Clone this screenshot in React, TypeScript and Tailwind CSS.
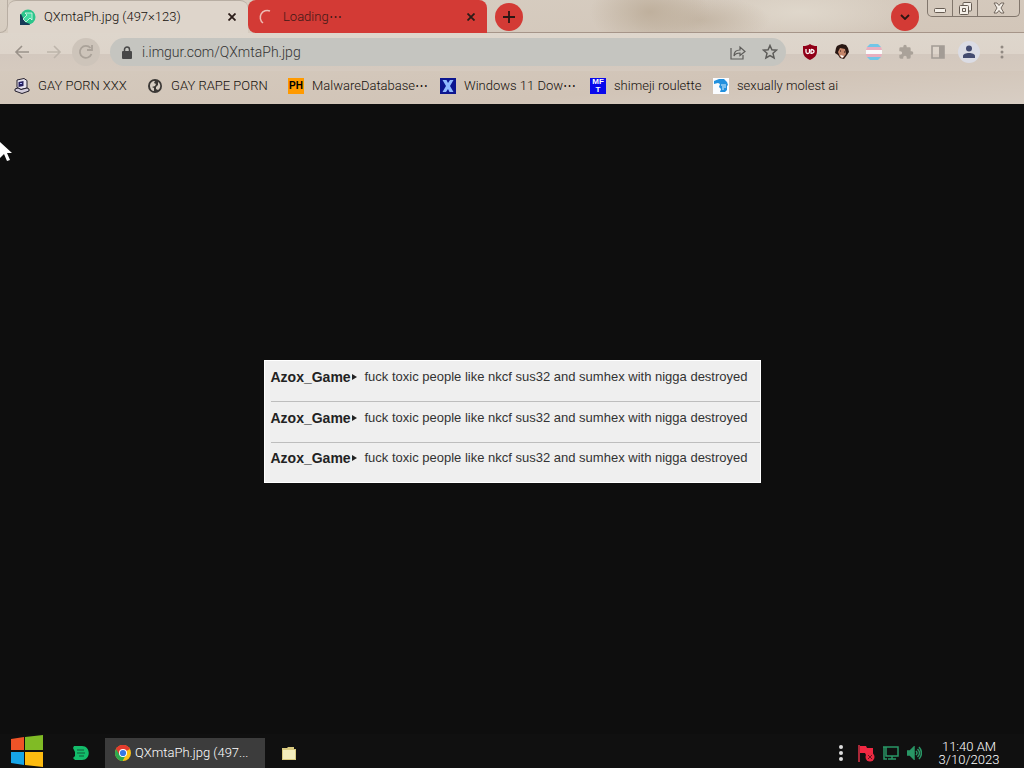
import type { ReactNode } from 'react';

function Arrow({ flip, className }: { flip?: boolean; className: string }) {
  return (
    <svg viewBox="0 0 16 16" className={`size-4 ${className}`} fill="none" stroke="currentColor" strokeWidth="1.600">
      {flip ? <path d="M1 8h13M8 2l6 6-6 6" /> : <path d="M15 8H2M8 2L2 8l6 6" />}
    </svg>
  );
}

function Cross() {
  return (
    <svg viewBox="0 0 8 8" className="size-2" fill="none" stroke="#2a1c18" strokeWidth="1.8">
      <path d="M.5.5l7 7M7.5.5l-7 7" />
    </svg>
  );
}

function Chrome() {
  return (
    <svg viewBox="0 0 16 16" className="size-4 shrink-0">
      <circle cx="8" cy="8" r="8" fill="#fbc116" />
      <path d="M8 8L1.1 4A8 8 0 0 1 14.9 4z" fill="#e33b2e" />
      <path d="M8 8L1.1 4A8 8 0 0 0 7.5 16L11 9.7z" fill="#2da94f" />
      <path d="M8 4h6.9A8 8 0 0 0 1.1 4L4.6 10z" fill="#e33b2e" />
      <circle cx="8" cy="8" r="4" fill="#fff" />
      <circle cx="8" cy="8" r="3.1" fill="#3578e5" />
    </svg>
  );
}

const bookmarks: { label: string; box: string; icon: ReactNode }[] = [
  {
    label: 'GAY PORN XXX',
    box: 'w-[133px]',
    icon: (
      <svg viewBox="0 0 16 16" className="size-4 shrink-0">
        <path d="M3 2l7-1.500 3 2v7.500l-6 1.500-4-2z" fill="#e7e3ef" stroke="#24202e" />
        <path d="M4.500 4l5-1v5l-5 1z" fill="#25205f" />
        <path d="M1 11l3-1 3 1.500 6-1.500 2 1v2l-7 2.500-7-2.500z" fill="#d2ccda" stroke="#24202e" />
        <path d="M6 5h2v1H6z" fill="#aab4ff" />
      </svg>
    ),
  },
  {
    label: 'GAY RAPE PORN',
    box: 'w-[141px]',
    icon: (
      <svg viewBox="0 0 16 16" className="size-4 shrink-0">
        <circle cx="8" cy="8" r="7" fill="#3b3836" />
        <path d="M3 8c0-3 2-5 5-5l-1 2 2 1-1 2-3 1 2 1v3c-2 0-4-2-4-5zM9 9l2-2V4c3 2 3 6 0 8l-2-1z" fill="#d6cdc3" />
      </svg>
    ),
  },
  {
    label: 'MalwareDatabase⋯',
    box: 'w-[152px]',
    icon: (
      <span className="flex size-4 shrink-0 items-center justify-center bg-[#ff9a00] font-['Liberation_Sans',sans-serif] text-[10px] font-bold text-black">
        PH
      </span>
    ),
  },
  {
    label: 'Windows 11 Dow⋯',
    box: 'w-[150px]',
    icon: (
      <svg viewBox="0 0 16 16" className="size-4 shrink-0">
        <path d="M0 0h16v16H0z" fill="#0c1690" />
        <path d="M2.500 2h4L8 5l2-3h3.500L10 8l3.500 6h-4L8 11l-2 3H2.500L6 8z" fill="#8fb9ff" />
      </svg>
    ),
  },
  {
    label: 'shimeji roulette',
    box: 'w-[123px]',
    icon: (
      <span className="flex size-4 shrink-0 flex-col items-center justify-center bg-[#0808ec] font-['Liberation_Sans',sans-serif] text-[8px] leading-[8px] font-bold text-white">
        <span>MF</span>
        <span>T</span>
      </span>
    ),
  },
  {
    label: 'sexually molest ai',
    box: 'w-[130px]',
    icon: (
      <svg viewBox="0 0 16 16" className="size-4 shrink-0">
        <path d="M0 0h16v16H0z" fill="#fafcff" />
        <path d="M1 3l5-2h5l3 3 1 3-1 1v4l-2 2H7l1-3-2-2 1-3-2-1-4 1z" fill="#2190de" />
        <path d="M8 7h5M9 9h4M9 11h2" stroke="#d8f0ff" />
      </svg>
    ),
  },
];

const message = 'fuck toxic people like nkcf sus32 and sumhex with nigga destroyed';

function TabStrip() {
  return (
    <div className="flex h-[33px] items-start">
      <div className="h-[33px] w-2 rounded-br-lg border-r border-b border-[#b8aea3]" />
      <div className="flex h-[33px] w-[240px] items-center gap-2 rounded-t-lg border-t border-[#b8aea3] bg-[#ded5cb] pr-3 pl-3">
        <svg viewBox="0 0 16 16" className="size-4 shrink-0">
          <circle cx="8" cy="8" r="7.500" fill="#2cc58b" />
          <path d="M1 5a7.500 7.500 0 1 0 9 10L5 13z" fill="#173b58" />
          <path d="M5 4h7v7l-2-2-4 4-3-3 4-4z" fill="#42dba1" stroke="#e6f8ed" strokeWidth=".8" />
        </svg>
        <span className="grow whitespace-nowrap">QXmtaPh.jpg (497×123)</span>
        <button aria-label="Close QXmtaPh.jpg"><Cross /></button>
      </div>
      <div className="flex h-[33px] w-[239px] items-center gap-2 rounded-lg rounded-br-none bg-[#d33a35] pr-3 pl-2.5">
        <svg viewBox="0 0 16 16" className="size-4 shrink-0" fill="none" stroke="#edbcb4" strokeWidth="1.500">
          <path d="M12 2A7 7 0 0 0 5 14" />
        </svg>
        <span className="grow pl-px text-[#3d1915]">Loading⋯</span>
        <button aria-label="Close loading tab"><Cross /></button>
      </div>
      <div className="flex h-[33px] grow items-start border-b border-[#a69589]">
        <button aria-label="New tab" className="mt-[3px] ml-2 flex size-7 items-center justify-center rounded-full bg-[#d33a35]">
          <svg viewBox="0 0 12 12" className="size-3" stroke="#2b1613" strokeWidth="1.800"><path d="M6 0v12M0 6h12" /></svg>
        </button>
        <button aria-label="Search tabs" className="mt-[3px] ml-auto flex size-7 items-center justify-center rounded-full bg-[#d33a35]">
          <svg viewBox="0 0 10 6" className="h-1.5 w-2.5" fill="none" stroke="#2b1613" strokeWidth="1.800"><path d="M1 1l4 4 4-4" /></svg>
        </button>
        <div className="mr-1 ml-2 flex h-[17px] rounded-b-[5px] border border-t-0 border-[#81766c] text-[#665c53]">
          <button aria-label="Minimize" className="flex w-[25px] items-center justify-center border-r border-[#81766c]">
            <svg viewBox="0 0 12 5" className="mt-1 h-[5px] w-3"><rect x=".5" y=".5" width="11" height="4" rx="1" fill="#f4efe8" stroke="currentColor" /></svg>
          </button>
          <button aria-label="Restore" className="flex w-[25px] items-center justify-center border-r border-[#81766c]">
            <svg viewBox="0 0 13 13" className="size-[13px]" fill="#f4efe8" stroke="currentColor">
              <rect x="4" y=".5" width="8.500" height="8.500" rx="1" />
              <rect x=".5" y="3.500" width="9" height="9" rx="1" />
              <path d="M3.500 6.500h3v3h-3z" />
            </svg>
          </button>
          <button aria-label="Close window" className="flex w-[41px] items-center justify-center">
            <svg viewBox="0 0 12 12" className="size-3" fill="#f4efe8" stroke="currentColor" strokeWidth=".9">
              <path d="M1 1h3l2 2.500L8 1h3L8 6l3 5H8L6 8.500 4 11H1l3-5z" />
            </svg>
          </button>
        </div>
      </div>
    </div>
  );
}

function Toolbar() {
  return (
    <div className="flex h-[38px] items-center bg-[linear-gradient(to_bottom,#ded6cc_0,#ddd4ca_21px,#d3c8be_21px,#d5cabf_100%)] px-3.5">
      <button aria-label="Back"><Arrow className="text-[#9a928a]" /></button>
      <button aria-label="Forward" className="ml-4"><Arrow flip className="text-[#bdb5ab]" /></button>
      <button aria-label="Reload" className="ml-2.5 flex size-7 items-center justify-center rounded-full bg-[#cdc4ba]">
        <svg viewBox="0 0 16 16" className="size-4" fill="none" stroke="#aaa299" strokeWidth="1.800">
          <path d="M13.500 10A6 6 0 1 1 12.500 4" /><path d="M14 1v5H9" />
        </svg>
      </button>
      <div className="ml-2.5 flex h-7 grow items-center rounded-full bg-[#c5c5c0] pr-2 pl-3">
        <svg viewBox="0 0 10 13" className="h-[13px] w-2.5 shrink-0" fill="#484848">
          <rect y="5" width="10" height="8" rx="1" /><path d="M2.500 6V3.500a2.500 2.500 0 0 1 5 0V6" fill="none" stroke="#484848" strokeWidth="1.500" />
        </svg>
        <input aria-label="Address" defaultValue="i.imgur.com/QXmtaPh.jpg" className="ml-2.5 h-5 min-w-0 grow bg-transparent text-sm text-[#333] outline-none" />
        <button aria-label="Share">
          <svg viewBox="0 0 16 16" className="size-4" fill="none" stroke="#5d5c59" strokeWidth="1.200">
            <path d="M1 4v11h12v-4M4 12c0-4 2-6 6-6V3l5 4.500-5 4V9c-3 0-5 1-6 3z" />
          </svg>
        </button>
        <button aria-label="Bookmark this page" className="ml-4">
          <svg viewBox="0 0 16 16" className="size-4" fill="none" stroke="#5d5c59" strokeWidth="1.500">
            <path d="M8 1.500l1.900 4.300 4.600.4-3.500 3.100 1.100 4.600L8 11.500l-4.100 2.400L5 9.300 1.500 6.200l4.600-.4z" />
          </svg>
        </button>
      </div>
      <button aria-label="Ad blocker" className="ml-4">
        <svg viewBox="0 0 16 16" className="size-4">
          <path d="M8 0c2 1.500 4 2 7 2v5c0 5-3 7-7 9-4-2-7-4-7-9V2c3 0 5-.5 7-2z" fill="#910018" />
          <path d="M4 5v3c0 2 3.500 2 3.500 0V5m1.500.500v3.800c4 .2 4-4 0-3.800" fill="none" stroke="#fff" strokeWidth="1.300" />
        </svg>
      </button>
      <button aria-label="Portrait extension" className="ml-4">
        <svg viewBox="0 0 16 16" className="size-4">
          <path d="M3 2l2-1 3-1 4 1 2 3 1 4-2 3-3 4-4-1-2-3-3-2 1-5z" fill="#291713" />
          <path d="M6 4l5 1 1 5-3 4-3-1-2-5z" fill="#c5866a" />
          <path d="M6 11l4 1-2 2z" fill="#fff" /><path d="M6 7h1M10 8h1" stroke="#291713" />
        </svg>
      </button>
      <button aria-label="Striped extension" className="ml-4">
        <svg viewBox="0 0 16 16" className="size-4">
          <path d="M4 0h8l3 3H1z" fill="#72c6e7" /><path d="M1 3h14l1 3H0z" fill="#e9afbf" />
          <path d="M0 6h16v4H0z" fill="#fafafa" /><path d="M0 10h16l-1 3H1z" fill="#e9afbf" /><path d="M1 13h14l-3 3H4z" fill="#72c6e7" />
        </svg>
      </button>
      <button aria-label="Extensions" className="ml-4">
        <svg viewBox="0 0 24 24" className="size-4" fill="#aaa299">
          <path d="M20.500 11H19V7a2 2 0 0 0-2-2h-4V3.500a2.500 2.500 0 0 0-5 0V5H4a2 2 0 0 0-2 2v3.800h1.500a2.700 2.700 0 0 1 0 5.400H2V20c0 1.100.9 2 2 2h3.800v-1.500a2.700 2.700 0 0 1 5.400 0V22H17a2 2 0 0 0 2-2v-4h1.500a2.500 2.500 0 0 0 0-5z" />
        </svg>
      </button>
      <button aria-label="Side panel" className="ml-4">
        <svg viewBox="0 0 16 16" className="size-4"><path d="M2 2h12v12H2z" fill="none" stroke="#a39c95" strokeWidth="1.600" /><path d="M9 2h5v12H9z" fill="#a39c95" /></svg>
      </button>
      <button aria-label="Profile" className="ml-3 flex size-[22px] items-center justify-center rounded-full bg-[#dbdce4]">
        <svg viewBox="0 0 14 14" className="size-3.5" fill="#434b70"><circle cx="7" cy="3.500" r="3" /><path d="M1 13v-2c0-4 12-4 12 0v2z" /></svg>
      </button>
      <button aria-label="Menu" className="ml-3.5">
        <svg viewBox="0 0 16 16" className="size-4" fill="#918982"><circle cx="8" cy="3" r="1.500" /><circle cx="8" cy="8" r="1.500" /><circle cx="8" cy="13" r="1.500" /></svg>
      </button>
    </div>
  );
}

function Taskbar() {
  return (
    <footer className="flex h-[34px] items-end bg-[#101010] text-white">
      <button aria-label="Start" className="ml-[11px] flex h-[34px] items-center">
        <svg viewBox="0 0 32 32" className="size-8">
          <path d="M0 4l13-2v13H0z" fill="#ef5327" /><path d="M14 2l18-2v15H14z" fill="#80bb25" />
          <path d="M0 17h13v13L0 28z" fill="#16a5e8" /><path d="M14 17h18v15l-18-2z" fill="#fdbb10" />
        </svg>
      </button>
      <button aria-label="Documents app" className="ml-[30px] flex h-[30px] items-center">
        <svg viewBox="0 0 16 14" className="h-3.5 w-4"><path d="M1 0h8c9 0 9 14 0 14H2L0 12l2-2V6L0 2z" fill="#13bc6a" /><path d="M4 4h7M4 7h8M6 10h5" stroke="#105b38" strokeWidth="1.200" /></svg>
      </button>
      <button className="ml-4 flex h-[30px] w-40 items-center gap-1 bg-[#3c3c3c] pl-2.5 text-[13px] whitespace-nowrap">
        <Chrome />
        <span>QXmtaPh.jpg (497...</span>
      </button>
      <button aria-label="Files" className="ml-[17px] flex h-[30px] items-center">
        <svg viewBox="0 0 14 13" className="h-[13px] w-3.5"><path d="M0 1h5l1-1h6v2h2v11H0z" fill="#d9ca80" /><path d="M1 3h12v9H1z" fill="#f3edbd" /></svg>
      </button>
      <div className="mr-6 ml-auto flex h-[30px] items-center">
        <button aria-label="Show hidden icons">
          <svg viewBox="0 0 6 18" className="h-[18px] w-1.5" fill="#ddd"><circle cx="3" cy="3" r="2" /><circle cx="3" cy="9" r="2" /><circle cx="3" cy="15" r="2" /></svg>
        </button>
        <button aria-label="Security alert" className="ml-3.5">
          <svg viewBox="0 0 17 17" className="size-[17px]"><path d="M1 0v17" stroke="#dc3146" strokeWidth="1.500" /><path d="M2 1h6l1 2h6v7H8L7 8H2z" fill="#f02842" /><circle cx="12" cy="12" r="4.500" fill="#e92941" /><path d="M10 10l4 4m0-4l-4 4" stroke="#6b1420" /></svg>
        </button>
        <button aria-label="Network" className="ml-2">
          <svg viewBox="0 0 16 16" className="size-4" fill="none" stroke="#299665" strokeWidth="1.500"><path d="M3 2h12v9H3zM9 11v3M5 14h8M0 2h3M1 2v12h3" /></svg>
        </button>
        <button aria-label="Volume" className="ml-2">
          <svg viewBox="0 0 15 14" className="h-3.5 w-[15px]" fill="none" stroke="#299665" strokeWidth="1.500"><path d="M0 5h3l4-4v12L3 9H0z" fill="#299665" /><path d="M9 5q2 2 0 4M10.500 3q4 4 0 8M12 1q5 6 0 12" /></svg>
        </button>
        <time className="ml-4 flex w-[62px] flex-col items-center text-[13px] leading-[13px]">
          <span className="whitespace-nowrap">11:40 AM</span>
          <span>3/10/2023</span>
        </time>
      </div>
    </footer>
  );
}

export default function App() {
  return (
    <div className="relative flex min-h-screen flex-col bg-[#0e0e0e] font-[Roboto,'Liberation_Sans',sans-serif] text-[13px] font-light text-[#15100c]">
      <header className="h-[104px] bg-[#d3c8bc] bg-[radial-gradient(ellipse_60px_36px_at_650px_12px,#bfb09d_0%,transparent_100%),radial-gradient(ellipse_70px_24px_at_700px_20px,#c4b6a5_0%,transparent_100%),radial-gradient(ellipse_110px_30px_at_800px_12px,#dfd7cb_0%,transparent_100%),linear-gradient(175deg,#d8cfc3,#d1c4b7_75%,#d8cec4)]">
        <TabStrip />
        <Toolbar />
        <nav aria-label="Bookmarks" className="flex h-[29px] items-center pl-3.5">
          {bookmarks.map((b) => (
            <a key={b.label} href="#" className={`flex shrink-0 items-center gap-2 whitespace-nowrap ${b.box}`}>
              {b.icon}
              <span>{b.label}</span>
            </a>
          ))}
        </nav>
      </header>
      <main className="flex grow items-center justify-center pt-1">
        <ul className="w-[497px] border border-white bg-[#efefef] font-['Liberation_Sans',sans-serif] text-[13px] font-normal text-[#333]">
          {[0, 1, 2].map((row) => (
            <li key={row} className="ml-1.5 flex h-[41px] items-center border-b border-[#bdbdbd] pb-2 whitespace-nowrap last:h-[39px] last:border-0">
              <strong className="w-20 text-sm font-bold text-[#222]">Azox_Game</strong>
              <svg viewBox="0 0 5 6" className="mr-2 ml-px h-1.5 w-[5px]" fill="#222"><path d="M0 0l5 3-5 3z" /></svg>
              <span>{message}</span>
            </li>
          ))}
        </ul>
      </main>
      <Taskbar />
      <svg viewBox="0 0 12 19" className="pointer-events-none absolute top-[142px] left-0 h-[19px] w-3" fill="#fff">
        <path d="M0 0v16l4-4 3 7 3-1-3-7h5z" />
      </svg>
    </div>
  );
}
